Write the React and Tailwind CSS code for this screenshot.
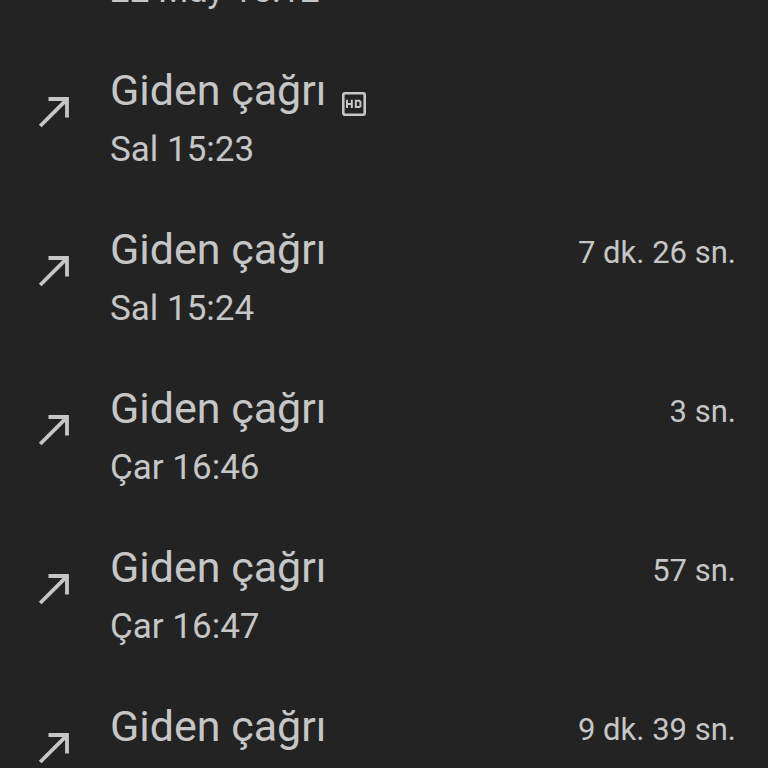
const calls = [
  { id: 1, time: "22 May 15:12" },
  { id: 2, time: "Sal 15:23", hd: true },
  { id: 3, time: "Sal 15:24", duration: "7 dk. 26 sn." },
  { id: 4, time: "Çar 16:46", duration: "3 sn." },
  { id: 5, time: "Çar 16:47", duration: "57 sn." },
  { id: 6, duration: "9 dk. 39 sn." },
];

function OutgoingIcon() {
  return (
    <svg className="w-8 h-8 shrink-0" viewBox="0 0 32 32" fill="none" stroke="currentColor" strokeWidth="3.8" aria-hidden="true">
      <path d="M10.5 3H29V21.5" />
      <path d="M2.2 30L28.4 3.8" />
    </svg>
  );
}

function HdIcon() {
  return (
    <svg className="w-6 h-6 shrink-0" viewBox="0 0 24 24" fill="none" stroke="currentColor" role="img" aria-label="HD">
      <rect x="1.3" y="1.3" width="21.4" height="21.4" rx="1.6" strokeWidth="2.6" />
      <path d="M5 7.8V16M9.8 7.8V16M5 12H9.8M13.8 8.8H17.4L18.4 9.8V14L17.4 15H13.8Z" strokeWidth="2" />
    </svg>
  );
}

function CallRow({ call }) {
  return (
    <li className="flex items-start h-[159px] pt-6 pl-[38px] pr-8">
      <div className="pt-9">
        <OutgoingIcon />
      </div>
      <div className="flex-1 min-w-0 pl-10">
        <div className="flex items-center gap-4">
          <h2 className="text-[43px] leading-[60px]">Giden çağrı</h2>
          {call.hd && <div className="pt-7"><HdIcon /></div>}
        </div>
        {call.time && <p className="text-[35px] leading-[60px]">{call.time}</p>}
      </div>
      {call.duration && (
        <span className="text-[31px] leading-[68px] whitespace-nowrap">{call.duration}</span>
      )}
    </li>
  );
}

export default function App() {
  return (
    <main className="h-screen overflow-hidden bg-[#232323] text-[#c6c6c6] font-['Roboto',sans-serif]">
      {/* The list is scrolled part of the way through its first row */}
      <ul className="-mt-[123px]">
        {calls.map((call) => (
          <CallRow key={call.id} call={call} />
        ))}
      </ul>
    </main>
  );
}
